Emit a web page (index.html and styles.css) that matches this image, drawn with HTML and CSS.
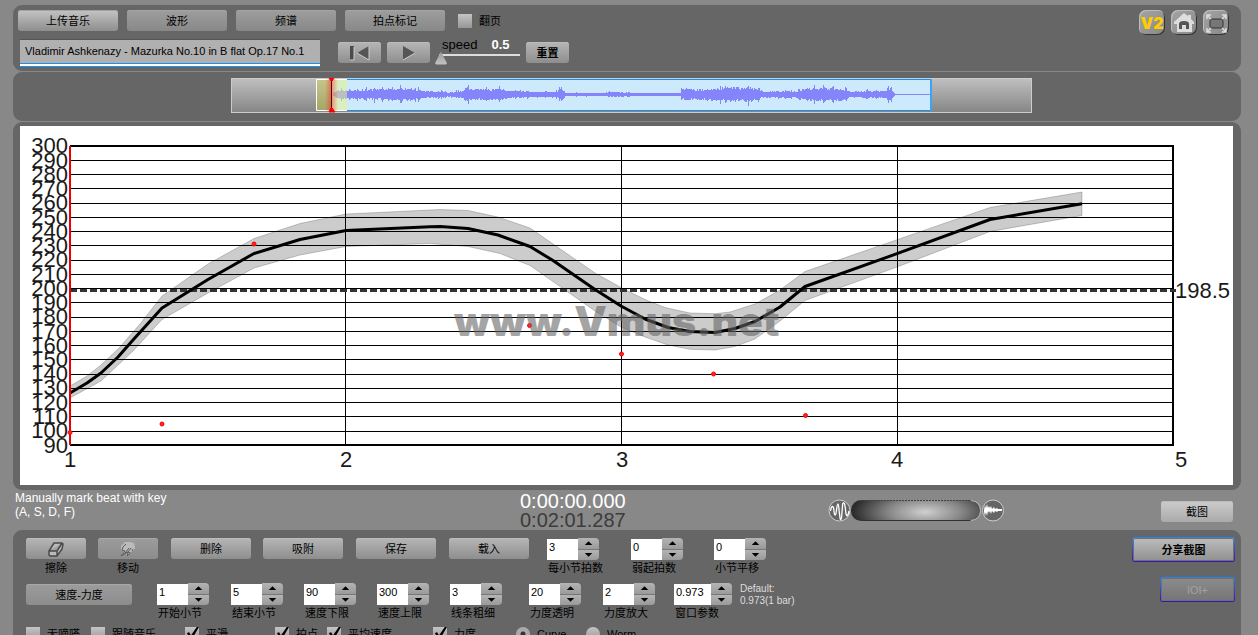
FILE: index.html
```html
<!DOCTYPE html>
<html lang="zh-CN">
<head>
<meta charset="utf-8">
<title>Vmus.net</title>
<link rel="stylesheet" href="styles.css">
</head>
<body>
<main class="app">
  <header class="panel toolbar">
    <div class="toolbar-main">
      <div class="tabs">
        <button class="btn tab tab-primary">上传音乐</button>
        <button class="btn tab">波形</button>
        <button class="btn tab">频谱</button>
        <button class="btn tab">拍点标记</button>
        <label class="check page-turn"><input type="checkbox"><span>翻页</span></label>
      </div>
      <div class="player">
        <input class="track" type="text" aria-label="Track" value="Vladimir Ashkenazy - Mazurka No.10 in B flat Op.17 No.1">
        <button class="btn play" aria-label="Rewind"><svg width="22" height="16" viewBox="0 0 22 16"><path d="M1 1h4v14H1z" fill="#4b4b4b"/><path d="M20 1v14L8 8z" fill="#555"/><path d="M1 15h4V2M20 1v14L8 8" fill="none" stroke="#ccc"/></svg></button>
        <button class="btn play" aria-label="Play"><svg width="16" height="16" viewBox="0 0 16 16"><path d="M2 1l12 7-12 7z" fill="#555"/><path d="M2 15l12-7" stroke="#ccc"/></svg></button>
        <div class="speed">
          <div class="speed-text"><label for="speed">speed</label><output for="speed">0.5</output></div>
          <input id="speed" type="range" min="0.5" max="2" step="0.1" value="0.5">
        </div>
        <button class="btn reset">重置</button>
      </div>
    </div>
    <nav class="shortcuts">
      <button class="tile tile-v2">V2</button>
      <button class="tile" aria-label="Home"><svg width="24" height="24" viewBox="0 0 24 24"><path d="M12 2L2 11v2h3v8h15v-8h2v-2l-3-3V4h-3v1z" fill="#ddd"/><path d="M7 18v-5q0-3 5-3t5 3v5h-3v-4h-4v4z" fill="#555"/></svg></button>
      <button class="tile" aria-label="Full screen"><svg width="24" height="24" viewBox="0 0 24 24"><rect x="6" y="8" width="13" height="9" rx="2" fill="#777" stroke="#333"/><path d="M3 8V4h4M3 4l4 4M22 8V4h-4M22 4l-4 4M3 17v4h4M3 21l4-4M22 17v4h-4M22 21l-4-4" fill="none" stroke="#ddd" stroke-width="1.500"/></svg></button>
    </nav>
  </header>

  <section class="panel overview">
    <svg class="overview-map" viewBox="231 78 801 35" role="img" aria-label="Waveform overview">
      <defs>
        <linearGradient id="bar" x1="0" y1="0" x2="0" y2="1"><stop offset="0" stop-color="#c0c0c0"/><stop offset="1" stop-color="#858585"/></linearGradient>
        <linearGradient id="lead" x1="0" y1="0" x2="0" y2="1"><stop offset="0" stop-color="#c6c68c"/><stop offset="1" stop-color="#a5a566"/></linearGradient>
        <linearGradient id="glow"><stop offset="0" stop-color="#f00" stop-opacity="0"/><stop offset=".5" stop-color="#f00" stop-opacity=".4"/><stop offset="1" stop-color="#f00" stop-opacity="0"/></linearGradient>
      </defs>
      <rect x="231.500" y="78.500" width="800" height="34" fill="url(#bar)" stroke="#ccc"/>
      <rect x="332" y="79" width="600" height="32" fill="#cdeafc"/>
      <path d="M346 79.500h585.500v31H346" fill="none" stroke="#1890ec"/>
      <path d="M931 79v32" stroke="#3ca4f4" stroke-width="2"/>
      <path id="wave" fill="#8585fb"/>
      <rect x="316.500" y="79.500" width="15" height="31" fill="url(#lead)"/>
      <rect x="332" y="80" width="15" height="30" fill="#e6f08c" fill-opacity=".55"/>
      <path d="M347 79.500h-30.500v31H347" fill="none" stroke="#fff"/>
      <rect x="325" y="79" width="13" height="32" fill="url(#glow)"/>
      <path d="M331.500 79v32" stroke="#600" stroke-width="1"/>
      <path d="M329 78h5l-2 3h-1zM329 112l2-4h1l3 4z" fill="#f00" stroke="#e00"/>
    </svg>
  </section>

  <section class="panel chart-panel">
    <svg class="chart" viewBox="20 126 1213 359" role="img" aria-label="Tempo curve">
      <path class="band" d="M70 386L87 376 101 365 120 347 140 324 162 296 208 264 254 238.500 300 223.500 346 214 440 209.500 468 210.500 498 217 530 228 595 273 621 287.500 645 299.500 665 307.500 690 313 715 313.700 730 312 755 304 780 290 805 271.500 897 239.700 990 207.500 1082 192V215.500L990 231.500 897 267 805 300.500 780 321 755 339 735 346.500 715 350 690 349.300 668 345 645 337 621 327 595 311 530 265.500 500 253.500 468 246.500 430 243.500 346 246.500 300 255 254 268 208 293 162 319.500 133 351 101 381 70 398z"/>
      <path class="grid" d="M70 160.500H1173M70 174.500H1173M70 188.500H1173M70 203.500H1173M70 217.500H1173M70 231.500H1173M70 245.500H1173M70 260.500H1173M70 274.500H1173M70 288.500H1173M70 302.500H1173M70 317.500H1173M70 331.500H1173M70 345.500H1173M70 359.500H1173M70 374.500H1173M70 388.500H1173M70 402.500H1173M70 416.500H1173M70 431.500H1173M345.500 146V445M621.500 146V445M897.500 146V445"/>
      <path class="frame" d="M70 146H1173V445H70"/>
      <path class="average" d="M70 290.500H1176"/>
      <path class="curve" d="M70 393L87 383 101 373 118 357 133 340 162 308 208 279.500 254 253.500 300 239.500 346 230.500 430 226.700 440 226.500 468 228.500 498 235 530 246.500 553 260.500 595 289.500 621 306 645 319 668 327.500 690 331.500 715 332.500 735 328.500 755 321.500 780 307 805 286.500 897 253.700 990 219.500 1082 203.700"/>
      <path class="cursor" d="M70 146V445"/>
      <g class="beats"><circle cx="70" cy="432.500" r="2"/><circle cx="162" cy="424" r="2"/><circle cx="254" cy="244" r="2"/><circle cx="529.500" cy="325.500" r="2"/><circle cx="621.500" cy="354" r="2"/><circle cx="713.500" cy="374" r="2"/><circle cx="805.500" cy="415.500" r="2"/></g>
      <text class="watermark" x="454" y="336">www.Vmus.net</text>
      <g class="tick tick-y">
        <text x="68" y="153">300</text><text x="68" y="168">290</text><text x="68" y="182">280</text><text x="68" y="196">270</text><text x="68" y="210">260</text><text x="68" y="225">250</text><text x="68" y="239">240</text><text x="68" y="253">230</text><text x="68" y="267">220</text><text x="68" y="282">210</text><text x="68" y="296">200</text><text x="68" y="310">190</text><text x="68" y="324">180</text><text x="68" y="339">170</text><text x="68" y="353">160</text><text x="68" y="367">150</text><text x="68" y="381">140</text><text x="68" y="395">130</text><text x="68" y="410">120</text><text x="68" y="424">110</text><text x="68" y="438">100</text><text x="68" y="453">90</text>
      </g>
      <g class="tick tick-x"><text x="70" y="467">1</text><text x="346" y="467">2</text><text x="622" y="467">3</text><text x="897" y="467">4</text><text x="1181" y="467">5</text></g>
      <text class="tick" x="1175" y="298">198.5</text>
    </svg>
  </section>

  <section class="status">
    <p class="hint">Manually mark beat with key<br>(A, S, D, F)</p>
    <div class="clock"><time>0:00:00.000</time><time class="total">0:02:01.287</time></div>
    <div class="zoomer">
      <svg width="178" height="26" viewBox="827 498 178 26" role="img" aria-label="Zoom">
        <defs>
          <radialGradient id="knob" gradientUnits="userSpaceOnUse" cx="0" cy="0" r="1" gradientTransform="translate(925 512) scale(72 26)"><stop offset="0" stop-color="#d0d0d0"/><stop offset=".5" stop-color="#888"/><stop offset="1" stop-color="#2c2c2c"/></radialGradient>
        </defs>
        <rect x="851" y="500" width="129" height="21" rx="10" fill="url(#knob)"/>
        <path d="M860 500.500h112" stroke="#444" stroke-dasharray="2 1"/>
        <path d="M862 520.500h108" stroke="#333"/>
        <path d="M971 500.500q9.500 1 9.500 10t-9.500 10" fill="none" stroke="#bbb"/>
        <circle cx="839.500" cy="510.500" r="10.500" fill="#666" stroke="#ccc"/>
        <path d="M830.500 511c1-6 3-6 3.500 0s2 5 2.500-1c1-8 2-8 2.500 0l1 8c0 2 1 2 1.500 0l1-12c0-4 2-4 2.500 0l1 8c1 3 2 2 3-3" fill="none" stroke="#fff" stroke-width="1.300"/>
        <circle cx="993" cy="510.500" r="10.500" fill="#666" stroke="#ccc"/>
        <path d="M984 510l1-5 1 3 1-4 1 4 1-2 1 2 1-2 1 3 2-2 1 2 2-1 1 1h4v2h-4l-1 1-2-1-1 2-2-2-1 3-1-3-1 2-1-2-1 5-1-4-1 4-1-4z" fill="#fff"/>
      </svg>
    </div>
    <button class="btn capture">截图</button>
  </section>

  <section class="panel controls">
    <div class="control-rows">
      <div class="row row-a">
        <div class="field w60"><button id="erase" class="btn" aria-label="擦除"><svg width="20" height="18" viewBox="0 0 20 18"><path d="M3 11L8 3h8l1 1-1 5-5 7H4l-1-1zM3 11h8l5-8M11 11v5" fill="#bbb" stroke="#4a4a4a" stroke-width="1.500" stroke-linejoin="round"/></svg></button><label for="erase">擦除</label></div>
        <div class="field w60"><button id="move" class="btn dim" aria-label="移动"><svg width="20" height="18" viewBox="0 0 20 18"><path d="M3 16l3-5-3-1V6l4-4h5l4 1 1 5-2 3-3 1-2 3-2 1 1-4-3 1z" fill="#bbb"/><path d="M3 16l4-5-3-1 1-3 3-3M9 16l1-4-3 1 4-5M12 13l-2-1 3-4M15 11l-1-2M3 16l5-3M9 16l3-3" fill="none" stroke="#5a5a5a"/></svg></button><label for="move">移动</label></div>
        <div class="field w80"><button class="btn">删除</button></div>
        <div class="field w80"><button class="btn">吸附</button></div>
        <div class="field w80"><button class="btn">保存</button></div>
        <div class="field w80"><button class="btn">载入</button></div>
        <div class="field"><div class="spin"><input id="beats" type="text" value="3"><span class="arrows"><button class="up" aria-label="+"></button><button class="down" aria-label="-"></button></span></div><label for="beats">每小节拍数</label></div>
        <div class="field"><div class="spin"><input id="pickup" type="text" value="0"><span class="arrows"><button class="up" aria-label="+"></button><button class="down" aria-label="-"></button></span></div><label for="pickup">弱起拍数</label></div>
        <div class="field"><div class="spin"><input id="shift" type="text" value="0"><span class="arrows"><button class="up" aria-label="+"></button><button class="down" aria-label="-"></button></span></div><label for="shift">小节平移</label></div>
      </div>
      <div class="row row-b">
        <div class="field w106"><button class="btn dim">速度-力度</button></div>
        <div class="field"><div class="spin"><input id="from" type="text" value="1"><span class="arrows"><button class="up" aria-label="+"></button><button class="down" aria-label="-"></button></span></div><label for="from">开始小节</label></div>
        <div class="field"><div class="spin"><input id="to" type="text" value="5"><span class="arrows"><button class="up" aria-label="+"></button><button class="down" aria-label="-"></button></span></div><label for="to">结束小节</label></div>
        <div class="field"><div class="spin"><input id="low" type="text" value="90"><span class="arrows"><button class="up" aria-label="+"></button><button class="down" aria-label="-"></button></span></div><label for="low">速度下限</label></div>
        <div class="field"><div class="spin"><input id="high" type="text" value="300"><span class="arrows"><button class="up" aria-label="+"></button><button class="down" aria-label="-"></button></span></div><label for="high">速度上限</label></div>
        <div class="field"><div class="spin"><input id="line" type="text" value="3"><span class="arrows"><button class="up" aria-label="+"></button><button class="down" aria-label="-"></button></span></div><label for="line">线条粗细</label></div>
        <div class="field"><div class="spin"><input id="alpha" type="text" value="20"><span class="arrows"><button class="up" aria-label="+"></button><button class="down" aria-label="-"></button></span></div><label for="alpha">力度透明</label></div>
        <div class="field"><div class="spin"><input id="gain" type="text" value="2"><span class="arrows"><button class="up" aria-label="+"></button><button class="down" aria-label="-"></button></span></div><label for="gain">力度放大</label></div>
        <div class="field wide"><div class="spin"><input id="window" type="text" value="0.973"><span class="arrows"><button class="up" aria-label="+"></button><button class="down" aria-label="-"></button></span></div><label for="window">窗口参数</label></div>
        <p class="note">Default:<br>0.973(1 bar)</p>
      </div>
      <div class="row row-c">
        <label class="check"><input type="checkbox"><span>无嘀嗒</span></label>
        <label class="check"><input type="checkbox"><span>跟随音乐</span></label>
        <label class="check"><input type="checkbox" checked><span>平滑</span></label>
        <label class="check"><input type="checkbox" checked><span>拍点</span></label>
        <label class="check"><input type="checkbox" checked><span>平均速度</span></label>
        <label class="check"><input type="checkbox" checked><span>力度</span></label>
        <label class="check"><input type="radio" name="mode" checked><span>Curve</span></label>
        <label class="check"><input type="radio" name="mode"><span>Worm</span></label>
      </div>
    </div>
    <div class="actions">
      <button class="btn outlined share">分享截图</button>
      <button class="btn outlined ioi" disabled>IOI+</button>
    </div>
  </section>
</main>
<script src="wave.js"></script>
</body>
</html>
```
FILE: styles.css
```css
* { box-sizing: border-box; }
html, body { height: 100%; }
body {
  margin: 0;
  overflow: hidden;
  background: #888;
  color: #000;
  font: 11px/14px "Liberation Sans", "Noto Sans CJK SC", sans-serif;
}
button, input { font: inherit; color: inherit; margin: 0; padding: 0; border: 0; }
p { margin: 0; }
svg { display: block; }

.app { padding: 5px 17px 0 13px; }
.panel { background: #666; border-radius: 9px; margin-bottom: 1px; }

.btn {
  display: flex;
  align-items: center;
  justify-content: center;
  height: 21px;
  border-radius: 3px;
  background: linear-gradient(#b6b6b6, #8e8e8e);
  box-shadow: inset 0 1px #bcbcbc;
}
.btn.dim { background: linear-gradient(#9c9c9c, #8c8c8c); box-shadow: inset 0 1px #a8a8a8; }

.toolbar { display: flex; justify-content: space-between; height: 66px; padding: 5px 12px 4px 5px; }
.tabs { display: flex; gap: 9px; height: 29px; }
.tab { width: 100px; background: linear-gradient(#9e9e9e, #888); box-shadow: inset 0 1px #a4a4a4; }
.tab-primary { background: linear-gradient(#c4c4c4, #8e8e8e); }
.page-turn { padding: 7px 0 0 4px; }
.player { display: flex; align-items: flex-start; padding-left: 2px; }
.track {
  width: 300px;
  height: 28px;
  padding: 0 5px 6px;
  background: linear-gradient(#fff, #fff) 0 24px / 100% 2px no-repeat, linear-gradient(#1a90f0, #1a90f0) 0 23px / 100% 4px no-repeat, #b0b0b0;
  border-top: 1px solid #555;
}
.play { width: 43px; margin-top: 3px; }
.track + .play { margin: 3px 6px 0 18px; }
.speed { width: 90px; margin-left: 5px; }
.speed-text { display: flex; gap: 14px; padding-left: 7px; font-size: 13px; line-height: 12px; }
.speed output { color: #fff; font-weight: bold; }
.reset { width: 43px; margin: 3px 0 0 1px; font-weight: bold; }
input[type="range"] { appearance: none; display: block; width: 85px; height: 14px; background: linear-gradient(#ddd, #ddd) 4px 3px / 100% 2px no-repeat; }
input[type="range"]::-webkit-slider-thumb { appearance: none; width: 12px; height: 13px; background: linear-gradient(#999, #c4c4c4); clip-path: polygon(50% 0, 100% 90%, 90% 100%, 10% 100%, 0 90%); }

.check { display: flex; align-items: center; gap: 7px; height: 14px; white-space: nowrap; }
.check input { appearance: none; width: 14px; height: 14px; background: linear-gradient(#c4c4c4, #969696); flex: none; }
.check input[type="radio"] { border-radius: 50%; }
.check input[type="checkbox"]:checked::after {
  content: "";
  display: block;
  width: 14px;
  height: 13px;
  background: #000;
  clip-path: polygon(14% 46%, 30% 40%, 42% 66%, 84% 0, 100% 0, 50% 92%, 34% 92%);
}
.check input[type="radio"]:checked { background: radial-gradient(circle, #333 0 2px, #aaa 3px); }

.shortcuts { display: flex; gap: 6px; }
.tile {
  display: grid;
  place-items: center;
  width: 26px;
  height: 25px;
  border-radius: 7px;
  background: linear-gradient(135deg, #a4a4a4, #888);
  box-shadow: inset 1px 1px #bbb, inset -1px -1px #333;
}
.tile-v2 { color: #fc0; font: 900 16px/20px Inter, sans-serif; }

.overview { display: flex; justify-content: center; height: 49px; padding: 6px 0 0 9px; }
.overview-map { width: 801px; height: 35px; }

.chart-panel { padding: 4px 8px 5px 7px; margin-bottom: 0; }
.chart { width: 100%; height: auto; background: #fff; }
.band { fill: #000; fill-opacity: .2; stroke: #000; stroke-opacity: .2; }
.grid { fill: none; stroke: #000; }
.frame { fill: none; stroke: #000; stroke-width: 2; }
.average { fill: none; stroke: #333; stroke-width: 3; stroke-dasharray: 7 3; }
.curve { fill: none; stroke: #000; stroke-width: 3; stroke-linejoin: round; }
.cursor { stroke: #e00; stroke-width: 2; }
.beats { fill: #f22; stroke: #f00; stroke-width: 1; }
.watermark { font: 900 41px Inter, sans-serif; fill: #666; fill-opacity: .6; }
.tick { font-size: 22px; fill: #1a1a1a; }
.tick-y { text-anchor: end; }
.tick-x { text-anchor: middle; }

.status { display: grid; grid-template-columns: 505px 307px 1fr 72px; height: 40px; padding: 1px 8px 0 2px; }
.hint { color: #fff; font-size: 12px; }
.clock { display: flex; flex-direction: column; color: #fff; font-size: 20px; line-height: 19px; padding-top: 1px; }
.clock .total { color: #3c3c3c; }
.zoomer { padding-top: 7px; }
.capture { margin-top: 10px; background: linear-gradient(#ccc, #aaa); }

.controls { display: flex; justify-content: space-between; padding: 8px 6px 20px 13px; }
.row { display: grid; }
.row-a { grid-template-columns: 72px 73px 92px 93px 93px 98px 84px 83px 60px; height: 45px; }
.row-b { grid-template-columns: 131px 74px 73px 73px 73px 79px 74px 71px 66px 70px; height: 44px; }
.row-c { grid-template-columns: 65px 94px 90px 52px 106px 83px 70px 60px; }
.field { display: flex; flex-direction: column; gap: 1px; width: 52px; text-align: center; white-space: nowrap; }
.field > .spin + label { text-align: left; padding-left: 1px; }
.field > .btn { width: 100%; margin-bottom: 1px; }
.w60 { width: 60px; }
.w80 { width: 80px; }
.w106 { width: 106px; padding-top: 1px; }
.wide { width: 58px; }
.spin { display: flex; height: 22px; }
.spin input { flex: 1; min-width: 0; height: 21px; margin-top: 1px; padding: 0 0 6px 2px; background: #fff; }
.arrows { display: flex; flex-direction: column; width: 21px; gap: 1px; background: #777; border-radius: 0 4px 4px 0; overflow: hidden; }
.arrows button { flex: 1; min-height: 0; display: grid; place-items: center; background: linear-gradient(#b4b4b4, #9a9a9a); }
.arrows button::before { content: ""; width: 8px; height: 4px; background: #000; }
.up::before { clip-path: polygon(50% 0, 100% 100%, 0 100%); }
.down::before { clip-path: polygon(0 0, 100% 0, 50% 100%); }
.note { color: #ddd; font-size: 10px; line-height: 12px; white-space: nowrap; }

.actions { display: flex; flex-direction: column; align-items: flex-end; gap: 15px; margin-top: -1px; }
.outlined {
  height: 25px;
  border: 1px solid transparent;
  background: linear-gradient(#bdbdbd, #909090) padding-box, linear-gradient(#2488f0, #3a10b8) border-box;
  box-shadow: inset 0 0 0 1px #707070;
}
.share { width: 103px; font-weight: bold; }
.ioi { width: 75px; color: #a2a2a2; background: linear-gradient(#8c8c8c, #757575) padding-box, linear-gradient(#2488f0, #3a10b8) border-box; }
```
FILE: wave.js
```js
// Loudness envelope: [x, half height] pairs, joined by straight lines.
const envelope = [
  [333, 1], [337, 5], [355, 5], [372, 6], [400, 7], [415, 7], [425, 3], [440, 4], [450, 2],
  [460, 4], [466, 8], [480, 6], [500, 7], [512, 4], [530, 3], [552, 3], [557, 4], [561, 9],
  [565, 2], [600, 1], [615, 3], [640, 1], [680, 1], [681, 7], [700, 6], [720, 8], [750, 9],
  [765, 3], [785, 4], [795, 3], [805, 8], [840, 8], [850, 3], [870, 4], [885, 4], [890, 8],
  [894, 1], [895, 0], [931, 0]
];
let seed = 7;
function random() {
  seed = (seed * 16807) % 2147483647;
  return seed / 2147483647;
}
let d = "";
let k = 0;
for (let x = 333; x < 931; x++) {
  while (x > envelope[k + 1][0]) k++;
  const [x0, a] = envelope[k];
  const [x1, b] = envelope[k + 1];
  const h = a + (b - a) * (x - x0) / (x1 - x0);
  const peak = random() > 0.9 ? 0.4 : 0;
  const up = Math.round(h * (0.5 + peak + 0.35 * random()));
  const down = Math.round(h * (0.5 + peak + 0.35 * random()));
  d += `M${x} ${94 - up}h1V${95 + down}h-1z`;
}
document.getElementById("wave").setAttribute("d", d);
```
